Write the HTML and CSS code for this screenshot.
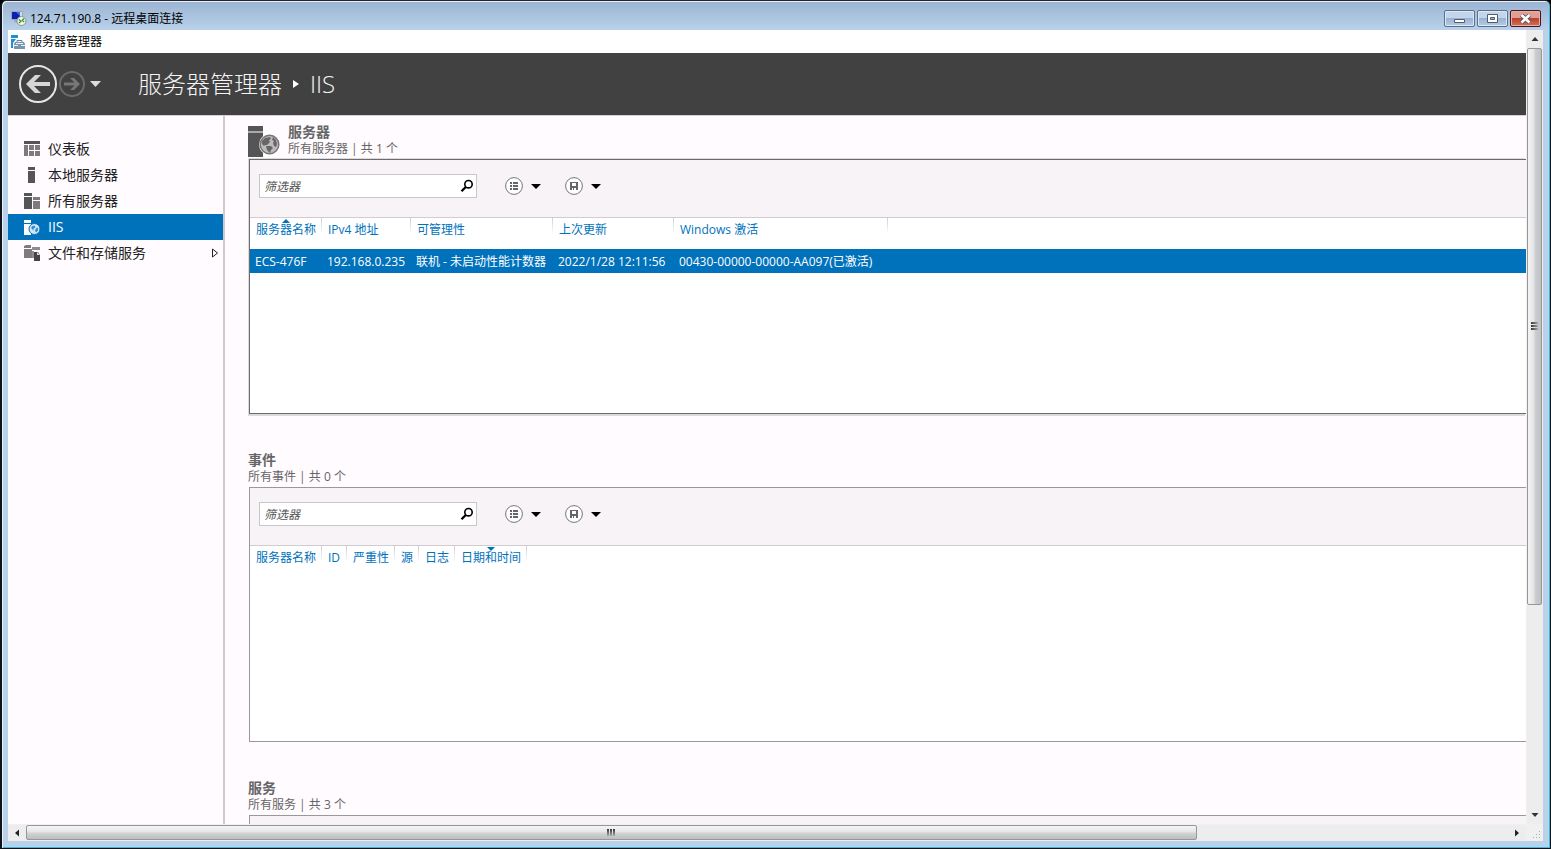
FILE: index.html
```html
<!DOCTYPE html>
<html lang="zh-CN">
<head>
<meta charset="utf-8">
<title>124.71.190.8 - 远程桌面连接</title>
<link rel="stylesheet" href="styles.css">
</head>
<body>
<svg width="0" height="0" class="defs" aria-hidden="true">
  <symbol id="search" viewBox="0 0 14 14"><circle cx="8.5" cy="5.2" r="3.7" fill="none" stroke="#000" stroke-width="1.6"/><path d="M5.8 8L1.5 12.2" stroke="#000" stroke-width="2.3"/></symbol>
  <symbol id="list" viewBox="0 0 18 18"><circle cx="9" cy="9" r="8.4" fill="#fff" stroke="#777"/><path d="M5 5h2v2H5zM8 5h5v2H8zM5 8h2v2H5zM8 8h5v2H8zM5 11h2v2H5zM8 11h5v2H8z" fill="#666"/></symbol>
  <symbol id="save" viewBox="0 0 18 18"><circle cx="9" cy="9" r="8.4" fill="#fff" stroke="#777"/><path d="M5 5h8v8H5z" fill="#666"/><path d="M7 6h4v3H7zM7 11h1v2H7zM9 11h2v2H9z" fill="#fff"/></symbol>
  <symbol id="caret" viewBox="0 0 10 5"><path d="M0 0h10L5 5z" fill="#000"/></symbol>
</svg>
<div class="window">
  <header class="titlebar">
    <svg class="app-icon" viewBox="0 0 16 16"><path d="M.5 1.500h11v8H.5z" fill="#d5dce6" stroke="#9aa5b5"/><path d="M1 2h8v7H1z" fill="#0a1fb4"/><path d="M5 2h4v4z" fill="#4a6be0"/><path d="M3 10h4v3L3 12z" fill="#a3abb8"/><circle cx="10.500" cy="11" r="4.500" fill="#f1f3ee" stroke="#8b9388"/><path d="M8 9.500l2 1.800-2 1.700M13.200 8.500l-2 1.800 2 1.700" fill="none" stroke="#2a9a2a" stroke-width="1.200"/></svg>
    <span class="caption">124.71.190.8 - 远程桌面连接</span>
    <div class="window-buttons">
      <button class="wbtn" aria-label="最小化"><svg viewBox="0 0 29 15"><path d="M9.500 8.500h10v3h-10z" fill="#fff" stroke="#525a6b"/></svg></button>
      <button class="wbtn" aria-label="最大化"><svg viewBox="0 0 29 15"><path d="M9.500 3.500h10v8h-10z" fill="#fff" stroke="#525a6b"/><path d="M12.500 6.500h4v2h-4z" fill="#9db8d6" stroke="#525a6b"/></svg></button>
      <button class="wbtn close" aria-label="关闭"><svg viewBox="0 0 29 15"><path d="M10.500 4l8 7.500M18.500 4l-8 7.500" stroke="#535666" stroke-width="4.400"/><path d="M10.500 4l8 7.500M18.500 4l-8 7.500" stroke="#fff" stroke-width="2.600"/></svg></button>
    </div>
  </header>
  <div class="client">
    <div class="remote">
      <div class="app-title">
        <svg class="app-icon" viewBox="0 0 16 16"><path d="M1 1h7v3H1zM1 5h5L3 9v5H1z" fill="#1e90d4"/><path d="M5 8h9l1 2v5H4v-5z" fill="#7896ad"/><path d="M7 8V6.500h5V8" fill="none" stroke="#64829c"/><path d="M4 11h4v1H4zM11 11h4v1h-4zM6 9h7v1H6z" fill="#e8f0f6"/></svg>
        <span>服务器管理器</span>
      </div>
      <nav class="navbar">
        <button class="nav-btn" aria-label="后退"><svg class="back" viewBox="0 0 38 38"><circle cx="19" cy="19" r="18" fill="none" stroke="#e6e6e6" stroke-width="2"/><path d="M7 19l9-9h6l-7 7h16v4H15l7 7h-6z" fill="#d6d6d6"/></svg></button>
        <button class="nav-btn" aria-label="前进"><svg class="forward" viewBox="0 0 26 26"><circle cx="13" cy="13" r="12" fill="none" stroke="#6b6b6b" stroke-width="2"/><path d="M21 13l-6-6h-4l4.500 4.500H5v3h10.500L11 19h4z" fill="#777"/></svg></button>
        <button class="nav-btn drop" aria-label="历史记录"><svg viewBox="0 0 11 6"><path d="M0 0h11L5.500 6z" fill="#dcdcdc"/></svg></button>
        <h1 class="crumbs"><span>服务器管理器</span><svg viewBox="0 0 6 8"><path d="M0 0l6 4-6 4z" fill="#fff"/></svg><span>IIS</span></h1>
      </nav>
      <div class="body">
        <aside class="sidebar">
          <a class="item" href="#dashboard"><svg viewBox="0 0 16 16"><path d="M0 0h16v3H0z" fill="#555"/><path d="M0 4h4v11H0zM5 4h5v5H5zM11 4h5v5h-5zM5 10h5v5H5zM11 10h5v5h-5z" fill="#7d7b7d"/></svg><span>仪表板</span></a>
          <a class="item" href="#local"><svg viewBox="0 0 16 16"><path d="M4 0h7v3H4zM4 4h7v12H4z" fill="#555"/></svg><span>本地服务器</span></a>
          <a class="item" href="#all"><svg viewBox="0 0 16 16"><path d="M0 0h8v3H0zM0 4h8v12H0z" fill="#555"/><path d="M9 4h7v3H9zM9 8h7v8H9z" fill="#7d7b7d"/></svg><span>所有服务器</span></a>
          <a class="item selected" href="#iis" aria-current="page"><svg viewBox="0 0 16 16"><path d="M0 1h7v3H0zM0 5h7v11H0z" fill="#fff"/><circle cx="10.500" cy="10" r="5.500" fill="#cfe5f5" stroke="#0072bc"/><path d="M7.500 7.500l3-1 1 2-2 1v2l-2-2zM12 9.500l2-1v3l-2 2-1-2z" fill="#2f8bcb"/></svg><span>IIS</span></a>
          <a class="item" href="#storage"><svg viewBox="0 0 16 16"><path d="M0 1l2-1h5v3H0zM0 4h8v9H0z" fill="#7d7b7d"/><path d="M8 2h8v3H8zM8 6h2v7H8z" fill="#8d8b8d"/><path d="M10 7h4l2 3v6h-6z" fill="#444"/><path d="M13 7l3 3h-3z" fill="#ddd"/></svg><span>文件和存储服务</span><svg class="expand" viewBox="0 0 6 10"><path d="M.5 1v8l5-4z" fill="none" stroke="#222"/></svg></a>
        </aside>
        <main class="content">
          <section class="tile active">
            <div class="tile-head">
              <svg class="tile-icon" viewBox="0 0 32 32"><path d="M0 1h15v5H0z" fill="#555"/><path d="M0 6h15v2H0z" fill="#aaa"/><path d="M0 8h15v24H0z" fill="#555"/><circle cx="21.500" cy="19.500" r="10.500" fill="#fffbff"/><circle cx="21.500" cy="19.500" r="9.300" fill="#bcbcbc" stroke="#757575" stroke-width="1.500"/><path d="M14 16l3-3 5-1 1 2-2 1 1 2-3 3-2 0-1 1-2-2zM18 21l5 0 2 2-2 2-1 3-3-3zM25 12l3 3 1 4-1 3-2-1-1-3 1-2-2-1z" fill="#666"/></svg>
              <div><h2>服务器</h2><p>所有服务器 | 共 1 个</p></div>
            </div>
            <div class="panel">
              <div class="toolbar">
                <label class="filter"><input type="text" placeholder="筛选器" aria-label="筛选服务器"><svg viewBox="0 0 14 14"><use href="#search"/></svg></label>
                <button class="tool" aria-label="查询"><svg class="round"><use href="#list"/></svg><svg class="caret"><use href="#caret"/></svg></button>
                <button class="tool" aria-label="保存查询"><svg class="round"><use href="#save"/></svg><svg class="caret"><use href="#caret"/></svg></button>
              </div>
              <div class="grid-area">
                <table>
                  <colgroup><col class="c-72"><col class="c-89"><col class="c-142"><col class="c-121"><col class="c-214"><col></colgroup>
                  <thead><tr><th class="asc">服务器名称</th><th>IPv4 地址</th><th>可管理性</th><th>上次更新</th><th>Windows 激活</th><td></td></tr></thead>
                  <tbody><tr><td>ECS-476F</td><td>192.168.0.235</td><td>联机 - 未启动性能计数器</td><td>2022/1/28 12:11:56</td><td>00430-00000-00000-AA097(已激活)</td><td></td></tr></tbody>
                </table>
              </div>
            </div>
          </section>
          <section class="tile">
            <div class="tile-head"><div><h2>事件</h2><p>所有事件 | 共 0 个</p></div></div>
            <div class="panel">
              <div class="toolbar">
                <label class="filter"><input type="text" placeholder="筛选器" aria-label="筛选事件"><svg viewBox="0 0 14 14"><use href="#search"/></svg></label>
                <button class="tool" aria-label="查询"><svg class="round"><use href="#list"/></svg><svg class="caret"><use href="#caret"/></svg></button>
                <button class="tool" aria-label="保存查询"><svg class="round"><use href="#save"/></svg><svg class="caret"><use href="#caret"/></svg></button>
              </div>
              <div class="grid-area">
                <table>
                  <colgroup><col class="c-72"><col class="c-25"><col class="c-48"><col class="c-24"><col class="c-36"><col class="c-72"><col></colgroup>
                  <thead><tr><th>服务器名称</th><th>ID</th><th>严重性</th><th>源</th><th>日志</th><th class="desc">日期和时间</th><td></td></tr></thead>
                </table>
              </div>
            </div>
          </section>
          <section class="tile">
            <div class="tile-head"><div><h2>服务</h2><p>所有服务 | 共 3 个</p></div></div>
            <div class="panel"><div class="toolbar"></div></div>
          </section>
        </main>
      </div>
    </div>
    <div class="scroll vertical">
      <button class="arrow" aria-label="向上滚动"><svg viewBox="0 0 8 8"><path d="M0.500 6h7L4 2z" fill="#333"/></svg></button>
      <div class="thumb"><i></i><i></i><i></i></div>
      <div class="rest"></div>
      <button class="arrow" aria-label="向下滚动"><svg viewBox="0 0 8 8"><path d="M0.500 2h7L4 6z" fill="#333"/></svg></button>
    </div>
    <div class="scroll horizontal">
      <button class="arrow" aria-label="向左滚动"><svg viewBox="0 0 8 8"><path d="M6 .5v7L2 4z" fill="#222"/></svg></button>
      <div class="thumb"><i></i><i></i><i></i></div>
      <div class="rest"></div>
      <button class="arrow" aria-label="向右滚动"><svg viewBox="0 0 8 8"><path d="M2 .5v7L6 4z" fill="#222"/></svg></button>
    </div>
    <div class="grip"><svg viewBox="0 0 8 8"><path d="M6 0h1v1H6zM3 3h1v1H3zM6 3h1v1H6zM0 6h1v1H0zM3 6h1v1H3zM6 6h1v1H6z" fill="#aaa"/></svg></div>
  </div>
</div>
</body>
</html>
```
FILE: styles.css
```css
* { box-sizing: border-box; }
body { margin: 0; background: #000; font: 12px/16px "Open Sans", "Noto Sans CJK SC", sans-serif; color: #222; }
button { padding: 0; border: 0; background: none; font: inherit; }
svg { display: block; flex: none; }
h1, h2, p { margin: 0; font-weight: 400; }
.defs { position: absolute; }

.window {
  display: flex; flex-direction: column; height: 100vh; padding: 0 7px 7px 6px;
  border: 1px solid #101418; border-left-width: 2px; border-top-color: #24242c;
  border-radius: 6px 6px 0 0;
  background: linear-gradient(#9ab4d2, #b9d1ea 29px, #b9d1ea);
  box-shadow: inset 1px 1px #e6f1fa, inset -1px -1px #3fb8dc;
}
.titlebar { display: flex; align-items: flex-start; height: 29px; padding: 9px 2px 0 3px; color: #000; }
.caption { line-height: 18px; }
.app-icon { width: 16px; height: 16px; margin-right: 3px; }
.window-buttons { display: flex; gap: 2px; margin-left: auto; }
.wbtn { width: 31px; height: 17px; border: 1px solid #5b6f8c; border-radius: 2px; background: linear-gradient(#c3d5ea 45%, #98b3d2 50%, #b7cde6); box-shadow: inset 0 0 0 1px #dce8f4; }
.wbtn svg { width: 29px; height: 15px; }
.wbtn.close { border-color: #4c1220; background: linear-gradient(#dfa093 45%, #bc412b 50%, #d2735a); box-shadow: inset 0 0 0 1px #e7b0a6; }

.client { flex: 1; min-height: 0; display: grid; grid-template-columns: minmax(0, 1fr) 17px; grid-template-rows: minmax(0, 1fr) 17px; background: #f0f0f0; }
.remote { display: flex; flex-direction: column; overflow: hidden; background: #fffbff; }
.app-title { display: flex; align-items: center; flex: none; height: 23px; padding-left: 2px; background: #fff; color: #000; }
.app-title .app-icon { margin-right: 4px; }
.navbar { display: flex; align-items: center; flex: none; height: 62px; padding-left: 11px; background: #414141; color: #f4f4f4; }
.nav-btn { margin-right: 2px; }
.back { width: 38px; height: 38px; }
.forward { width: 26px; height: 26px; }
.drop { margin-left: 3px; }
.drop svg { width: 11px; height: 6px; }
.crumbs { display: flex; align-items: center; gap: 11px; margin-left: 35px; font-size: 24px; line-height: 32px; font-weight: 300; }
.crumbs svg { width: 6px; height: 8px; }

.body { display: flex; flex: 1; min-height: 0; border-top: 1px solid #d4d0d4; }
.sidebar { flex: none; width: 217px; padding-top: 20px; border-right: 2px solid #cdcacd; }
.item { display: flex; align-items: center; gap: 8px; height: 26px; padding: 0 5px 0 16px; font-size: 14px; color: #222; text-decoration: none; }
.item svg { width: 16px; height: 16px; }
.item .expand { width: 6px; height: 10px; margin-left: auto; }
.item.selected { background: #0072bc; color: #fff; }

.content { flex: 1; min-width: 0; padding: 8px 0 0 23px; overflow: hidden; }
.tile { margin-bottom: 38px; }
.tile-head { display: flex; gap: 8px; height: 35px; color: #666; }
.tile-icon { width: 32px; height: 32px; margin-top: 1px; }
.tile h2 { font-size: 14px; font-weight: 700; line-height: 16px; }
.tile p { line-height: 17px; }
.panel { margin-left: 1px; border: 1px solid #999; border-right: 0; background: #fff; }
.active .panel { border-color: #6b6b6b; box-shadow: -1px -1px #dcdadc, -1px 2px #dcdadc; }
.toolbar { display: flex; align-items: flex-start; height: 58px; padding: 14px 9px; border-bottom: 1px solid #d0ccd0; background: #f7f3f7; }
.filter { display: flex; align-items: center; width: 218px; height: 24px; margin-right: 28px; padding: 0 2px 0 4px; border: 1px solid #c9c7c9; background: #fff; }
.filter input { flex: 1; min-width: 0; padding: 1px 0 0; border: 0; outline: 0; background: none; font: italic 12px/16px "Open Sans", "Noto Sans CJK SC", sans-serif; }
.filter input::placeholder { color: #555; opacity: 1; }
.filter svg { width: 14px; height: 14px; }
.tool { display: flex; align-items: center; gap: 8px; height: 24px; margin-right: 24px; }
.round { width: 18px; height: 18px; }
.caret { width: 10px; height: 5px; }

.grid-area { min-height: 195px; }
table { width: 100%; table-layout: fixed; border-collapse: collapse; text-align: left; white-space: nowrap; }
.c-24 { width: 24px; }
.c-25 { width: 25px; }
.c-36 { width: 36px; }
.c-48 { width: 48px; }
.c-72 { width: 72px; }
.c-89 { width: 89px; }
.c-121 { width: 121px; }
.c-142 { width: 142px; }
.c-214 { width: 214px; }
thead tr { height: 31px; }
th { position: relative; padding: 4px 0 0 6px; vertical-align: top; font-weight: 400; color: #0072bc; background: linear-gradient(#d0ccd0, #fff) right top / 1px 16px no-repeat; }
.asc::before, .desc::before { content: ""; position: absolute; top: 1px; left: 32px; border: 4px solid transparent; border-top: 0; border-bottom-color: #0072bc; }
.desc::before { border-bottom: 0; border-top: 4px solid #0072bc; }
tbody tr { height: 24px; background: #0072bc; color: #fff; }
tbody td { padding: 1px 0 0 5px; }

.scroll { display: flex; background: #ededed; }
.vertical { flex-direction: column; margin-left: 1px; }
.horizontal { margin-top: 1px; }
.arrow { display: flex; align-items: center; justify-content: center; flex: none; }
.arrow svg { width: 8px; height: 8px; }
.vertical .arrow { height: 18px; }
.horizontal .arrow { width: 18px; }
.thumb { display: flex; align-items: center; justify-content: center; gap: 1px; border: 1px solid #979797; border-radius: 2px; }
.vertical .thumb { flex: 557; flex-direction: column; margin-right: 1px; background: linear-gradient(90deg, #f4f4f4, #e4e4e6 45%, #cdced1 55%, #bfc0c4); }
.horizontal .thumb { flex: 1171; margin-bottom: 1px; background: linear-gradient(#f4f4f4, #e6e6e6 45%, #d2d2d2 55%, #bdbdbf); }
.thumb i { width: 7px; height: 2px; background: linear-gradient(90deg, #333, #aaa); }
.horizontal .thumb i { width: 2px; height: 7px; background: linear-gradient(#333, #aaa); }
.vertical .rest { flex: 202; }
.horizontal .rest { flex: 312; }
.grip { display: flex; align-items: flex-end; justify-content: flex-end; padding: 2px; }
.grip svg { width: 8px; height: 8px; }
```
